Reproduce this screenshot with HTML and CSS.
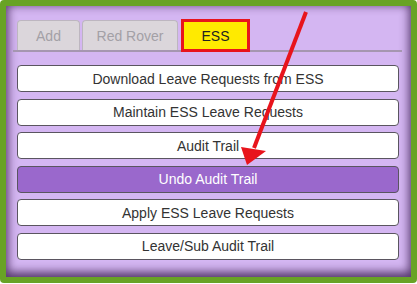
FILE: index.html
```html
<!DOCTYPE html>
<html lang="en">
<head>
    <meta charset="UTF-8">
    <title>ESS Menu</title>
    <link rel="stylesheet" href="styles.css">
</head>
<body>

    <div class="frame">
        <div class="tabs">
            <div class="tab">Add</div>
            <div class="tab tab-wide">Red Rover</div>
            <div class="tab tab-active">ESS</div>
        </div>

        <div class="menu">
            <button class="menu-btn">Download Leave Requests from ESS</button>
            <button class="menu-btn">Maintain ESS Leave Requests</button>
            <button class="menu-btn">Audit Trail</button>
            <button class="menu-btn menu-btn-selected">Undo Audit Trail</button>
            <button class="menu-btn">Apply ESS Leave Requests</button>
            <button class="menu-btn">Leave/Sub Audit Trail</button>
        </div>

        <!-- callout arrow -->
        <svg class="arrow" width="417" height="284" viewBox="0 0 417 284">
            <line x1="306" y1="12" x2="254" y2="148" stroke="#e8141c" stroke-width="4"/>
            <polygon points="247,165 241,147 266,151" fill="#e8141c"/>
        </svg>
    </div>

</body>
</html>
```

FILE: styles.css
```css
body {
    margin: 0;
    padding: 0;
    font-family: 'Liberation Sans', Arial, sans-serif;
    background: #fff;
}

.frame {
    position: relative;
    width: 417px;
    height: 283px;
    box-sizing: border-box;
    border: 6px solid #68a325;
    border-radius: 4px;
    background: #d4b6f2;
    box-shadow: inset 0 -3px 10px 2px rgba(55, 25, 75, 0.8);
    padding: 14px 12px 0 11px;
}

.tabs {
    display: flex;
    align-items: flex-end;
    margin: 0 -3px 0 -4px;
    padding-left: 4px;
    border-bottom: 2px solid #a596b0;
    height: 30px;
}

.tab {
    width: 63px;
    height: 30px;
    box-sizing: border-box;
    margin-right: 2px;
    background: #dbd6db;
    border: 1px solid #bdb6c0;
    border-bottom: none;
    border-radius: 4px 4px 0 0;
    color: #a3a0a6;
    font-size: 14px;
    display: flex;
    align-items: center;
    justify-content: center;
}

.tab-wide {
    width: 96px;
    margin-right: 3px;
}

.tab-active {
    width: 69px;
    height: 33px;
    border: 3px solid #e8141c;
    border-radius: 0;
    background: #ffea00;
    color: #222;
    margin-bottom: -2px;
}

.menu {
    display: flex;
    flex-direction: column;
    gap: 6.6px;
    margin-top: 13px;
}

.menu-btn {
    height: 27px;
    width: 100%;
    box-sizing: border-box;
    background: #fff;
    border: 1px solid #5a5560;
    border-radius: 4px;
    color: #333;
    font-family: 'Liberation Sans', Arial, sans-serif;
    font-size: 14px;
    padding: 0;
}

.menu-btn-selected {
    background: #9a68cc;
    color: #fff;
}

.arrow {
    position: absolute;
    left: -6px;
    top: -6px;
    pointer-events: none;
}
```
